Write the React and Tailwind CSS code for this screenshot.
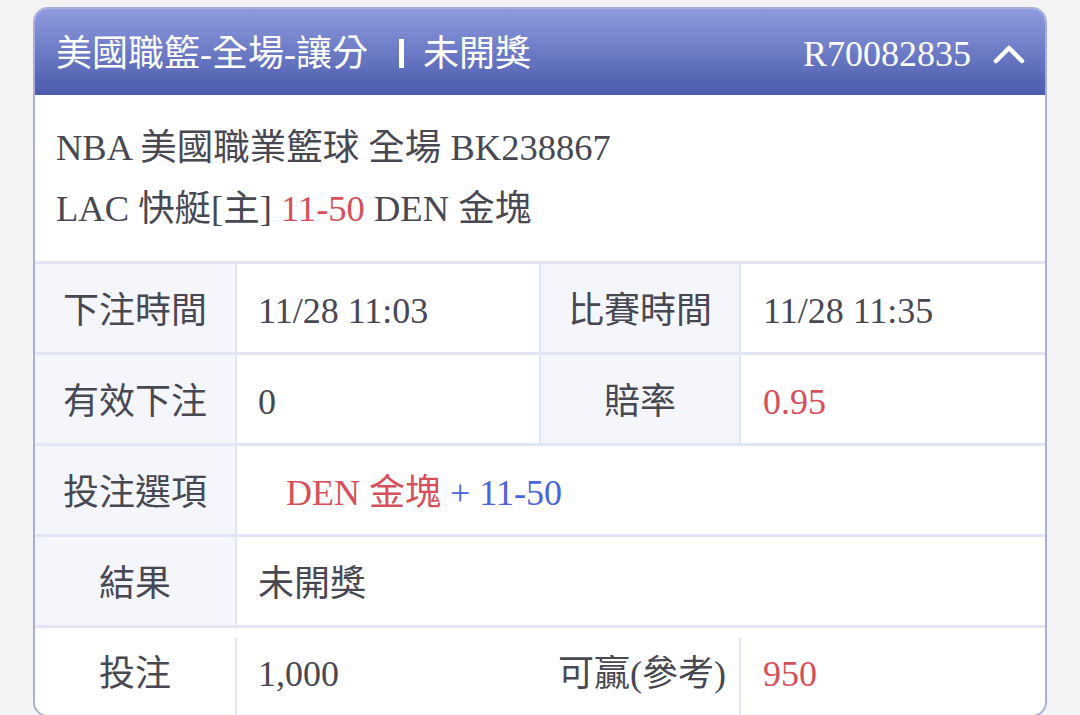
import React from "react";

const FONT = "font-['Liberation_Serif','Noto_Sans_CJK_TC',serif]";

function Label({ children, white }) {
  return (
    <div
      className={`w-[200px] shrink-0 flex items-center justify-center pt-[5px] ${white ? "bg-white" : "bg-[#f5f6fc]"}`}
    >
      {children}
    </div>
  );
}

function VSep({ partial }) {
  return partial ? (
    <div className="w-[2px] shrink-0 pt-[10px] bg-white">
      <div className="w-full h-full bg-[#e2e5f6]" />
    </div>
  ) : (
    <div className="w-[2px] shrink-0 bg-[#e2e5f6]" />
  );
}

export default function App() {
  return (
    <div className={`min-h-screen bg-[#f3f3f5] pt-[7px] px-[33px] ${FONT} text-[#474852]`}>
      <div className="w-[1014px] h-[710px] border-2 border-[#a9aedb] rounded-[15px] overflow-hidden bg-white flex flex-col">
        {/* header */}
        <div className="h-[86px] shrink-0 bg-linear-to-b from-[#8f9bdf] to-[#4c5bab] flex items-center justify-between pl-[21px] pr-[20px] text-white">
          <div className="flex items-center text-[36px] leading-none pt-[3px]">
            <span>美國職籃-全場-讓分</span>
            <span className="ml-[31px] mr-[19px] w-[5px] h-[29px] bg-white" />
            <span>未開獎</span>
          </div>
          <div className="flex items-center gap-[22px] pt-[3px]">
            <span className="text-[36px] leading-none">R70082835</span>
            <svg width="32" height="22" viewBox="0 0 32 22" fill="none">
              <polyline points="3,18 16,5 29,18" stroke="white" strokeWidth="4.5" strokeLinecap="round" strokeLinejoin="round" />
            </svg>
          </div>
        </div>

        {/* info */}
        <div className="pl-[21px] pt-[22px] pb-[22px] text-[36.5px] leading-[61px]">
          <div>NBA 美國職業籃球 全場 BK238867</div>
          <div>
            LAC 快艇[主] <span className="text-[#d6505c]">11-50</span> DEN 金塊
          </div>
        </div>

        {/* table */}
        <div className="text-[36px] leading-none">
          <div className="flex h-[91px] border-t-[3px] border-[#e2e5f6]">
            <Label>下注時間</Label>
            <VSep />
            <div className="w-[302px] shrink-0 flex items-center pl-[21px] pt-[5px]">11/28 11:03</div>
            <VSep />
            <div className="w-[198px] shrink-0 flex items-center justify-center pt-[5px] bg-[#f5f6fc]">比賽時間</div>
            <VSep />
            <div className="flex-1 flex items-center pl-[22px] pt-[5px]">11/28 11:35</div>
          </div>
          <div className="flex h-[91px] border-t-[3px] border-[#e2e5f6]">
            <Label>有效下注</Label>
            <VSep />
            <div className="w-[302px] shrink-0 flex items-center pl-[21px] pt-[5px]">0</div>
            <VSep />
            <div className="w-[198px] shrink-0 flex items-center justify-center pt-[5px] bg-[#f5f6fc]">賠率</div>
            <VSep />
            <div className="flex-1 flex items-center pl-[22px] pt-[5px] text-[#d6505c]">0.95</div>
          </div>
          <div className="flex h-[91px] border-t-[3px] border-[#e2e5f6]">
            <Label>投注選項</Label>
            <VSep />
            <div className="flex-1 flex items-center pl-[49px] pt-[5px]">
              <span className="text-[#d6505c]">DEN 金塊</span>
              <span className="text-[#4a64dc]">&nbsp;+ 11-50</span>
            </div>
          </div>
          <div className="flex h-[91px] border-t-[3px] border-[#e2e5f6]">
            <Label>結果</Label>
            <VSep />
            <div className="flex-1 flex items-center pl-[21px] pt-[5px]">未開獎</div>
          </div>
          <div className="flex h-[90px] border-t-[3px] border-[#e2e5f6]">
            <Label white>投注</Label>
            <VSep partial />
            <div className="w-[302px] shrink-0 flex items-center pl-[21px] pt-[5px]">1,000</div>
            <div className="w-[2px] shrink-0" />
            <div className="w-[198px] shrink-0 flex items-center justify-end pr-[13px] pt-[5px]">可贏(參考)</div>
            <VSep partial />
            <div className="flex-1 flex items-center pl-[22px] pt-[5px] text-[#d6505c]">950</div>
          </div>
        </div>
      </div>
    </div>
  );
}
